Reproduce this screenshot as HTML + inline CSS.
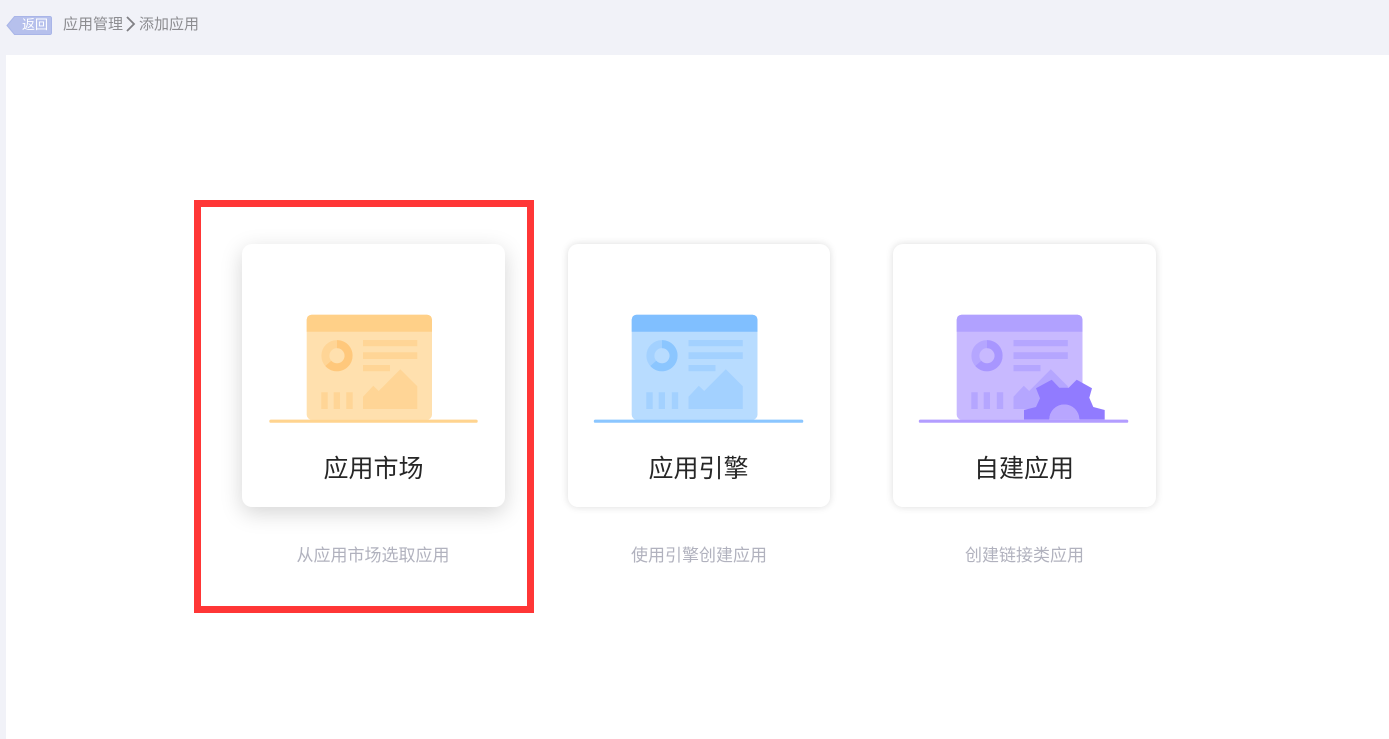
<!DOCTYPE html>
<html lang="zh">
<head>
<meta charset="utf-8">
<title>添加应用</title>
<style>
html,body{margin:0;padding:0;width:1389px;height:739px;overflow:hidden;background:#f1f2f8;font-family:"Liberation Sans","Noto Sans CJK SC",sans-serif;}
.abs{position:absolute;white-space:nowrap;}
.main{position:absolute;left:6px;top:55px;width:1383px;height:684px;background:#fff;}
.card{position:absolute;top:244px;width:263px;height:263px;background:#fff;border-radius:10px;box-shadow:0 0 8px rgba(0,0,0,.14);}
.card.on{box-shadow:0 6px 22px rgba(0,0,0,.17);}
.title{position:absolute;top:452px;width:263px;height:34px;line-height:34px;text-align:center;font-size:25px;color:#262626;font-weight:400;}
.sub{position:absolute;top:544px;width:263px;height:24px;line-height:24px;text-align:center;font-size:17px;color:#b1b2be;font-weight:400;}
.ill{position:absolute;top:300px;width:230px;height:130px;}
.red{position:absolute;left:194px;top:200px;width:326px;height:399px;border:7px solid #ff3636;}
.crumb{font-size:15px;color:#8c8c90;line-height:20px;top:15px;font-weight:400;}
</style>
</head>
<body>
<svg class="abs" style="left:0;top:8px" width="60" height="34" viewBox="0 8 60 34">
  <path d="M14.5 16.5H50a1.5 1.5 0 0 1 1.5 1.5V33a1.5 1.5 0 0 1-1.500 1.500H14.500L7 25.500z" fill="#b6c0ec" stroke="#a9b5e8" stroke-width="1"/>
</svg>
<div class="abs" style="left:22px;top:16px;font-size:13px;line-height:18px;color:#fff;">返回</div>
<div class="abs crumb" style="left:63px;">应用管理</div>
<svg class="abs" style="left:124px;top:15px" width="12" height="18" viewBox="0 0 12 18">
  <path d="M3 2l7 7-7 7" fill="none" stroke="#808084" stroke-width="1.8"/>
</svg>
<div class="abs crumb" style="left:139px;">添加应用</div>

<div class="main"></div>

<div class="card on" style="left:242px;"></div>
<div class="card" style="left:568px;width:262px;"></div>
<div class="card" style="left:893px;"></div>

<svg class="ill" style="left:260px" viewBox="0 0 230 130">
  <rect x="46.7" y="14.7" width="125.3" height="105" rx="5" fill="#ffe0ae"/>
  <path d="M46.7 31.7V19.7a5 5 0 0 1 5-5H167a5 5 0 0 1 5 5V31.7z" fill="#ffd088"/>
  <circle cx="77" cy="55.7" r="11.6" fill="none" stroke="#ffd596" stroke-width="8"/>
  <path d="M77 44.1A11.6 11.6 0 1 1 68.3 63.4" fill="none" stroke="#ffc87c" stroke-width="8"/>
  <path d="M103 40h54.3v6.3H103zM103 52.3h54.3V59H103zM103 65h27v6.3h-27z" fill="#ffd596"/>
  <path d="M61.3 92.3h6.4V109h-6.4zM73.7 92.3H80V109h-6.3zM86.3 92.3h6.4V109h-6.4z" fill="#ffd596"/>
  <path d="M103 96.7L113.3 85.7 118.7 91 140.3 69.3 157.3 86.3V109H103z" fill="#ffd596"/>
  <rect x="9.3" y="119.6" width="208.4" height="3.2" rx="1.6" fill="#ffd48f"/>
</svg>

<svg class="ill" style="left:585px" viewBox="0 0 230 130">
  <rect x="46.7" y="14.7" width="125.8" height="105" rx="5" fill="#b8dcff"/>
  <path d="M46.7 31.7V19.7a5 5 0 0 1 5-5H167.500a5 5 0 0 1 5 5V31.700z" fill="#80bfff"/>
  <circle cx="77" cy="55.7" r="11.6" fill="none" stroke="#a3d1ff" stroke-width="8"/>
  <path d="M77 44.1A11.6 11.6 0 1 1 68.3 63.4" fill="none" stroke="#8bc6ff" stroke-width="8"/>
  <path d="M103.500 40h54.300v6.300H103.500zM103.500 52.300h54.300V59H103.500zM103.500 65h27v6.300h-27z" fill="#a3d1ff"/>
  <path d="M61.300 92.300h6.400V109h-6.400zM73.700 92.300H80V109h-6.300zM86.800 92.300h6.400V109h-6.400z" fill="#a3d1ff"/>
  <path d="M103.500 96.700L113.800 85.700 119.200 91 140.800 69.300 157.800 86.300V109H103.500z" fill="#a3d1ff"/>
  <rect x="8.800" y="119.600" width="209.500" height="3.200" rx="1.600" fill="#8bc6ff"/>
</svg>

<svg class="ill" style="left:910px" viewBox="0 0 230 130">
  <rect x="46.7" y="14.7" width="125.8" height="105" rx="5" fill="#c8b9ff"/>
  <path d="M46.7 31.7V19.7a5 5 0 0 1 5-5H167.500a5 5 0 0 1 5 5V31.700z" fill="#b1a1ff"/>
  <circle cx="77" cy="55.7" r="11.6" fill="none" stroke="#b5a6ff" stroke-width="8"/>
  <path d="M77 44.1A11.6 11.6 0 1 1 68.3 63.4" fill="none" stroke="#a896ff" stroke-width="8"/>
  <path d="M103.500 40h54.300v6.300H103.500zM103.500 52.300h54.300V59H103.500zM103.500 65h27v6.300h-27z" fill="#b5a6ff"/>
  <path d="M61.300 92.300h6.400V109h-6.400zM73.700 92.300H80V109h-6.300zM86.800 92.300h6.400V109h-6.400z" fill="#b5a6ff"/>
  <path d="M103.500 96.700L113.800 85.700 119.200 91 140.800 69.300 157.800 86.300V109H103.500z" fill="#b5a6ff"/>
  <path d="M114 119.500V110L126 107 130 98.300 126 88.300 141.700 79.700 149.300 87.700H158.700L166.700 79.700 182 88.300 179.300 97.700 183.300 107 194.700 110V119.500H169.300A15 15 0 0 0 139.300 119.500z" fill="#917bff"/>
  <path d="M139.300 119.500A15 15 0 0 1 169.300 119.500z" fill="#b8a6ff"/>
  <rect x="8.800" y="119.600" width="209.500" height="3.200" rx="1.600" fill="#b39dff"/>
</svg>

<div class="title" style="left:242px;">应用市场</div>
<div class="title" style="left:567px;">应用引擎</div>
<div class="title" style="left:892.500px;">自建应用</div>

<div class="sub" style="left:241.500px;">从应用市场选取应用</div>
<div class="sub" style="left:567.500px;">使用引擎创建应用</div>
<div class="sub" style="left:893px;">创建链接类应用</div>

<div class="red"></div>
</body>
</html>
